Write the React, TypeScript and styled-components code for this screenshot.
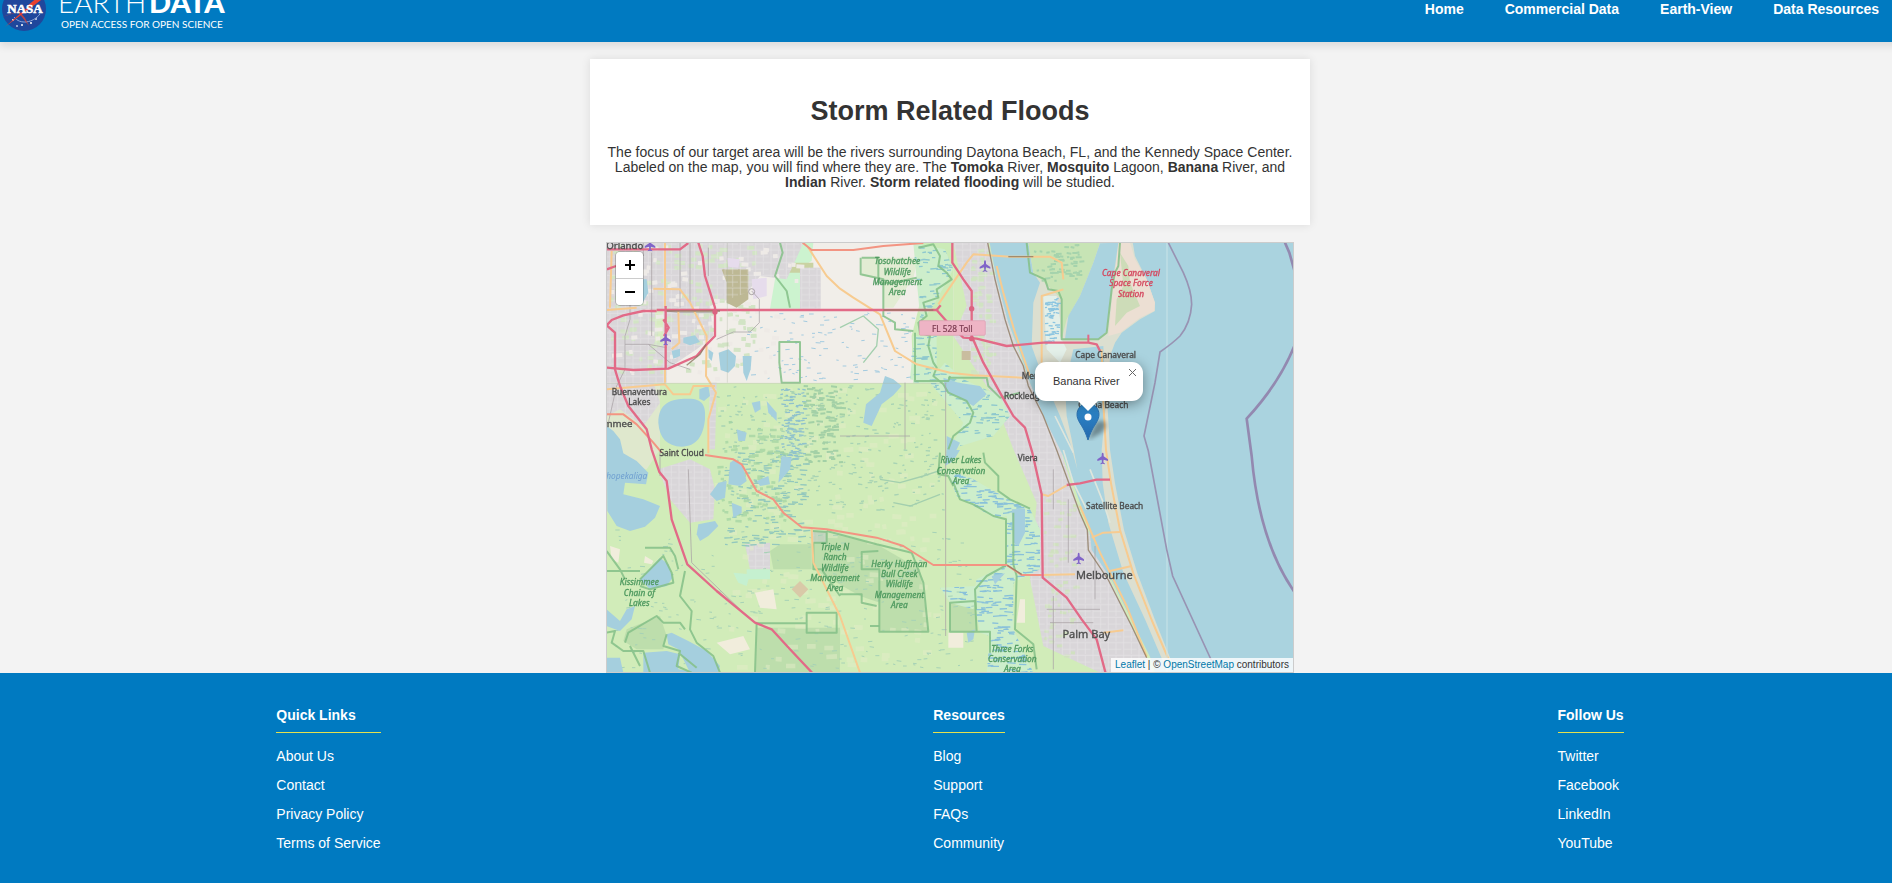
import React from "react";
import styled, { createGlobalStyle } from "styled-components";

const GlobalStyle = createGlobalStyle`
  *, *::before, *::after { box-sizing: border-box; }
  body {
    margin: 0;
    overflow: hidden;
    background: #f3f3f3;
    color: #333;
    font-family: "Liberation Sans", Arial, sans-serif;
    font-size: 14px;
  }
`;

const BLUE = "#007ac1";

const Page = styled.div`
  margin-right: -8px;
`;

const Header = styled.header`
  position: relative;
  display: flex;
  justify-content: space-between;
  height: 42px;
  padding-right: 21px;
  background: ${BLUE};
  box-shadow: 0 4px 8px rgba(0, 0, 0, 0.1);
`;

const LogoLink = styled.a`
  display: block;
  height: 42px;
  overflow: hidden;
`;

const Nav = styled.nav`
  display: flex;
  align-items: flex-start;
  gap: 41px;
  padding-top: 1px;
`;

const NavLink = styled.a`
  color: #fff;
  font-weight: bold;
  line-height: 16px;
  text-decoration: none;
`;

const Main = styled.main`
  display: flex;
  flex-direction: column;
  align-items: center;
  gap: 17px;
  padding-top: 17px;
`;

const Card = styled.section`
  width: 100%;
  max-width: 720px;
  padding: 36px 10px 35px;
  background: #fff;
  box-shadow: 0 0 9px rgba(0, 0, 0, 0.1);
  text-align: center;
`;

const Title = styled.h1`
  margin: 0 0 18px;
  font-size: 27px;
  line-height: 32px;
`;

const Lead = styled.p`
  margin: 0;
  line-height: 15px;
`;

const MapFrame = styled.section`
  position: relative;
  width: 100%;
  max-width: 688px;
  height: 431px;
  overflow: hidden;
  border: 1px solid #ccc;
  background: #ddd;
`;

const MapArt = styled.svg`
  display: block;
  width: 100%;
  height: 100%;
  filter: blur(0.6px);
`;

const ZoomControl = styled.div`
  position: absolute;
  top: 9px;
  left: 9px;
  width: 27px;
  border-radius: 4px;
  overflow: hidden;
  box-shadow: 0 0 0 1px rgba(0, 0, 0, 0.2);
`;

const ZoomButton = styled.button`
  display: grid;
  place-items: center;
  width: 100%;
  height: 26px;
  padding: 0;
  border: 0;
  background: #fff;
  color: #000;
  cursor: pointer;

  & + & {
    height: 27px;
    border-top: 1px solid #ccc;
  }
`;

const Popup = styled.div`
  position: absolute;
  top: 119px;
  left: calc(50% + 85px);
  width: 108px;
  padding: 12px 18px 13px;
  border-radius: 11px;
  background: #fff;
  box-shadow: 0 3px 13px rgba(0, 0, 0, 0.4);
  font-size: 11px;
  line-height: 14px;
  white-space: nowrap;

  &::after {
    content: "";
    position: absolute;
    top: 100%;
    left: 43px;
    border: 10px solid transparent;
    border-top-color: #fff;
    border-bottom: 0;
  }
`;

const PopupClose = styled.button`
  position: absolute;
  top: 0;
  right: 0;
  display: grid;
  place-items: center;
  width: 21px;
  height: 21px;
  padding: 0;
  border: 0;
  background: none;
  cursor: pointer;
`;

const Marker = styled.svg`
  position: absolute;
  top: 160px;
  left: calc(50% + 126px);
  width: 37px;
  height: 38px;
`;

const Attribution = styled.div`
  position: absolute;
  right: 0;
  bottom: 0;
  padding: 0 4px;
  background: rgba(255, 255, 255, 0.8);
  font-size: 10px;
  line-height: 14px;

  a {
    color: #0078a8;
    text-decoration: none;
  }
`;

const Footer = styled.footer`
  display: flex;
  justify-content: space-around;
  padding: 34px 0 32px;
  background: ${BLUE};
  color: #fff;
`;

const FooterHeading = styled.h2`
  margin: 0 0 15px;
  padding-bottom: 9px;
  border-bottom: 1px solid #e6e04e;
  font-size: 14px;
  line-height: 16px;
`;

const FooterList = styled.ul`
  display: flex;
  flex-direction: column;
  gap: 13px;
  margin: 0;
  padding: 0;
  list-style: none;
  line-height: 16px;
`;

const FooterLink = styled.a`
  display: block;
  color: #fff;
  text-decoration: none;
`;

/* ---------- Logo ---------- */

const Logo = () => (
  <svg width="240" height="42" viewBox="0 0 240 42" role="img" aria-label="NASA Earthdata">
    <defs>
      <clipPath id="disc">
        <circle cx="24" cy="9" r="22" />
      </clipPath>
    </defs>
    <circle cx="24" cy="9" r="22" fill="#1f479c" />
    <g clipPath="url(#disc)" fill="#fff">
      <circle cx="13" cy="20" r="1" />
      <circle cx="22" cy="25" r="1" />
      <circle cx="31" cy="23" r="1" />
      <circle cx="17" cy="26" r="1" opacity="0.7" />
      <circle cx="36" cy="19" r="1" opacity="0.8" />
      <path d="M14 17C20 25 33 23 40 14" fill="none" stroke="#8ea6d8" strokeWidth="1" />
    </g>
    <path d="M5 27C14 20 28 10 45 -3L42 -3C29 6 18 15 5 27Z" fill="#e8402f" />
    <path d="M30 6L46 -4L38 -3L27 6Z" fill="#e8402f" />
    <path d="M2 17L18 12L29 26L25 18L19 11Z" fill="#e8402f" opacity="0.75" />
    <text
      x="25"
      y="13"
      textAnchor="middle"
      fill="#fff"
      fontFamily="Liberation Serif, serif"
      fontWeight="bold"
      fontSize="13"
      stroke="#fff"
      strokeWidth="0.5"
    >
      NASA
    </text>
    <text x="58" y="13" fill="#fff" fontFamily="Lato, sans-serif" fontWeight="300" fontSize="28">
      EARTH
    </text>
    <text x="149" y="13" fill="#fff" fontFamily="Lato, sans-serif" fontWeight="900" fontSize="29">
      DATA
    </text>
    <text x="61" y="28" fill="#fff" fontFamily="Lato, sans-serif" fontSize="10">
      OPEN ACCESS FOR OPEN SCIENCE
    </text>
  </svg>
);

/* ---------- Map drawing ---------- */

function scatter(seed: number, count: number, x: number, y: number, w: number, h: number, len: number) {
  let s = seed;
  const next = () => {
    s = (s * 1103515245 + 12345) % 2147483648;
    return s / 2147483648;
  };
  let d = "";
  for (let i = 0; i < count; i++) {
    const px = Math.round(x + next() * w);
    const py = Math.round(y + next() * h);
    const l = Math.round(len * (0.5 + next()));
    d += `M${px} ${py}l${l} ${Math.round(next() * 4 - 2)}`;
  }
  return d;
}

const water = [
  "M175 560C175 500 215 488 260 488C310 486 318 510 315 550C310 600 290 632 245 632C200 630 178 605 175 560Z",
  "M298 460L325 450L330 480L312 495L298 488Z",
  "M356 350L385 340L408 360L405 390L385 410L362 402Z",
  "M428 360H455L452 400L440 435L430 410Z",
  "M250 305L285 298L300 318L270 328L250 320Z",
  "M325 340L340 350L335 375L326 365Z",
  "M105 130H140L145 170L125 205L108 200Z",
  "M215 345L240 338L240 360L220 368Z",
  "M20 570L40 585L60 610L70 652L110 675L145 710L138 745L75 740L70 775L130 790L180 810L165 845L135 872L90 885L50 870L22 825Z",
  "M330 775L355 740L380 735L375 785L350 795Z",
  "M295 865L345 855L355 870L325 900L300 915L290 895Z",
  "M395 800L425 812L425 830L400 845Z",
  "M390 680L405 670L428 690L440 735L420 750L385 745Z",
  "M470 735L505 720L510 745L480 750Z",
  "M545 660L575 665L570 700L545 730L535 740Z",
  "M455 500L480 495L482 520L465 530Z",
  "M500 495L530 530L530 555L505 530Z",
  "M410 580L440 590L435 615L415 615Z",
  "M120 1030L180 965L205 985L218 1025L200 1050L150 1060Z",
  "M20 1120L60 1155L80 1120L105 1110L95 1150L60 1185L20 1170Z",
  "M130 1250L200 1245L240 1255L235 1300L300 1310H130Z",
  "M200 1195L215 1190L265 1215L320 1245L360 1290L355 1310H270L235 1240L205 1225Z",
  "M20 1265H60L70 1310H20Z",
  "M855 420L880 430L905 450L880 478L845 505L815 570L790 560L798 505L840 470Z",
  "M1030 425L1075 440L1140 450L1160 475L1120 510L1070 480L1035 465Z",
  "M1040 642H1080L1060 675L1035 690Z",
  "M1235 820L1275 818L1275 890L1255 930L1240 920Z",
  "M1175 1020L1215 1012L1185 1045Z",
  "M1100 1190L1125 1180L1120 1210L1105 1220Z",
  "M1040 600L1080 620L1060 660L1040 650Z",
];

const urban = [
  "M21 21H610L560 130L480 120L440 170L330 210L340 300L290 340L200 400V440H21Z",
  "M21 440H160L180 500L130 570L60 520L21 540Z",
  "M175 700L270 670L330 700L345 760L340 850L270 860L210 790Z",
  "M600 95H662V218H600Z",
  "M435 925L510 920V1000H450Z",
  "M635 885H680V920H635Z",
  "M1060 21H1165L1190 130L1225 260L1290 440L1385 650L1440 832L1530 1032L1640 1262L1660 1310H1500L1330 1230L1290 1030L1310 800L1240 640L1180 480L1060 300L1100 210Z",
  "M1300 170H1330V380H1290Z",
  "M330 440H350L345 640H325Z",
];

const marshes = [
  "M940 21L1035 40L1060 100L1000 210L960 260L940 330L930 430L980 440L1035 380L1090 430L1200 480L1230 540L1180 600L1050 640L1090 560L990 440L940 430V340L960 240Z",
  "M1040 700L1070 780L1190 850L1220 840V985L1130 1030L1120 1080L1140 1190L1170 1200L1160 1310H1300L1240 1180V1040L1320 1000V880L1290 820L1190 770L1120 730Z",
  "M940 300H1010V440H940Z",
  "M1020 1055L1130 1050L1120 1120L1050 1100Z",
];

const reserves = [
  "M640 885H680V890L830 925L960 1000L985 1185H840V1100L780 1080L640 1000Z",
  "M470 1175H720V1310H468Z",
  "M1050 1100L1130 1120V1185H1050Z",
  "M510 945L540 925H635V1000H520Z",
  "M80 1180L180 1140L200 1200L190 1240L110 1240L70 1215Z",
];

const reserveLines = [
  "M540 20L548 50L525 120L560 165L570 215",
  "M538 318H600V440H545L538 380Z",
  "M785 65H835V140H880L950 125",
  "M782 65V115L850 130V240L885 260V280L940 285",
  "M955 35L1000 25L1020 60L1015 90L1040 110L1055 130L1010 160L1015 185L970 200L980 240L955 260L960 290L990 300L985 330L1000 380L1010 395L1000 420L1030 445L1045 470L1100 495L1120 530L1110 560L1060 600L1045 640",
  "M945 290V435H1045L1050 420",
  "M1045 425H1160L1165 450L1200 485L1260 470",
  "M1280 20L1290 110L1335 130L1345 160L1375 165L1385 190V310H1495L1520 290L1535 160L1545 110L1555 90L1560 20",
  "M1060 740L1080 790L1120 805L1180 840L1218 850V985",
  "M1020 650L1015 715L1045 720L1060 750",
  "M1150 650L1155 680L1195 720L1195 765L1230 790L1290 818",
  "M1240 830V985L1250 1020L1245 1180L1270 1200L1300 1225L1310 1300",
  "M1130 1185L1125 1095L1050 1100V1187H1170V1250",
  "M1218 988L1160 1020L1125 1060L1128 1120",
  "M640 920V1000H665L720 1080M638 885L680 888V920H640",
  "M680 885L830 925L935 950L970 1040L985 1187H838V1000H785V948L835 945",
  "M720 1075H785V1100L830 1110M810 1170H838",
  "M465 1310L470 1162H620V1190H710V1130H620V1160",
  "M135 935H210L225 960L235 1000",
  "M20 945L60 1000L75 1030M20 1005H120",
  "M120 1030L190 960L215 1010L220 1040L150 1060L120 1050",
  "M255 1005L240 1080L275 1125L270 1180L290 1220L340 1260L360 1310",
  "M75 1220L85 1190L170 1140L190 1160L240 1160L255 1180M20 1190L45 1185L35 1220L70 1245L130 1245L150 1310M90 1230L120 1290",
  "M200 1195L190 1230L240 1245L230 1290L275 1310M235 1250L290 1295",
];

const trunkRoads = [
  "M20 40H240L265 21",
  "M21 100L48 90",
  "M295 20L308 60L315 120L345 215V300L320 325L290 360L205 398L100 402L20 395",
  "M170 222H1010L1045 262L1090 305L1130 308L1220 330L1330 320H1465L1490 325L1500 345",
  "M20 268L35 252L70 238L130 225H170",
  "M20 268L45 290V400L60 450L85 510L140 580L155 640L178 708L200 735L215 850L262 985L350 1065L465 1160L515 1180L570 1240L638 1312",
  "M197 210V398M190 250L206 275L192 300",
  "M1057 20V80L1090 130L1115 165V300L1150 380L1200 470L1240 540L1275 575L1297 650L1325 775L1328 1025L1400 1085L1445 1150L1490 1210L1517 1312",
  "M1010 222L1022 208",
  "M1400 747L1440 742L1490 731H1530",
];

const primaryRoads = [
  "M315 657L400 670L425 685L470 765L520 790L550 830L605 874L680 880L830 905L910 930L1000 987H1220L1265 1017H1325",
  "M608 20L635 42H760L850 30L970 21",
  "M20 535H70L110 565L160 620L185 650",
];

const secondaryRoads = [
  "M195 20V215M195 395V440",
  "M160 158L240 160L270 200L320 300L318 420L348 470L325 550V652",
  "M235 225L238 320L215 340",
  "M35 45L30 215M20 222L110 215",
  "M20 460L195 445L220 475H270L280 450H345",
  "M625 35L680 120L720 158L760 185L840 235L885 345L950 385L1050 410L1120 418L1270 425",
  "M1015 205L1100 80L1120 55L1230 62H1350L1385 80L1390 130",
  "M1325 380V180L1390 160",
  "M1190 90L1210 170L1245 290L1290 420",
  "M635 876L640 980L720 1140L780 1310",
  "M1325 775L1345 780L1400 748M1325 1017L1425 1015",
  "M1475 905L1510 890L1560 888M1530 1005L1595 990M1510 1190L1570 1183",
  "M1505 340L1510 500L1518 642L1533 742L1560 882L1600 1012L1655 1152L1712 1285",
  "M1440 810L1500 950L1580 1110L1640 1262",
];

const greyRoads = [
  "M90 200V250L75 300V400L50 450L25 560",
  "M75 325H145L200 335M145 325L210 380L270 400",
  "M200 225L240 230H340",
  "M455 165L478 190V260L450 288H400L350 310",
  "M155 50V300M240 21V215M270 21V200M130 21V60",
  "M325 35V120M180 642V720",
  "M915 440V640M1037 440V1200M720 600H930",
  "M1405 790V980M1360 700V820",
  "M265 700L275 980L420 1120",
  "M1360 1080V1300M1485 930V1090M1340 1120H1500M1350 1160H1480",
];

const planes: [number, number][] = [
  [197, 310],
  [150, 28],
  [1155, 90],
  [1508, 667],
  [1436, 967],
];

interface MapLabel {
  x: number;
  y: number;
  lines: string[];
  size?: number;
  tone?: "place" | "park" | "base" | "lake";
  anchor?: "start" | "middle" | "end";
}

const labels: MapLabel[] = [
  { x: 130, y: 38, lines: ["Orlando"], size: 29, anchor: "end" },
  { x: 118, y: 477, lines: ["Buenaventura", "Lakes"] },
  { x: 97, y: 573, lines: ["Kissimmee"], size: 29, anchor: "end" },
  { x: 245, y: 660, lines: ["Saint Cloud"] },
  { x: 142, y: 728, lines: ["Tohopekaliga"], tone: "lake", anchor: "end" },
  { x: 892, y: 85, lines: ["Tosohatchee", "Wildlife", "Management", "Area"], tone: "park" },
  { x: 1593, y: 120, lines: ["Cape Canaveral", "Space Force", "Station"], tone: "base" },
  { x: 1608, y: 367, lines: ["Cape Canaveral"], anchor: "end" },
  { x: 1265, y: 430, lines: ["Merritt Island"], anchor: "start" },
  { x: 1212, y: 490, lines: ["Rockledge"], anchor: "start" },
  { x: 1585, y: 515, lines: ["Cocoa Beach"], anchor: "end" },
  { x: 1283, y: 674, lines: ["Viera"] },
  { x: 1544, y: 819, lines: ["Satellite Beach"] },
  { x: 1513, y: 1029, lines: ["Melbourne"], size: 33 },
  { x: 1459, y: 1207, lines: ["Palm Bay"], size: 33 },
  { x: 1083, y: 682, lines: ["River Lakes", "Conservation", "Area"], tone: "park" },
  { x: 705, y: 942, lines: ["Triple N", "Ranch", "Wildlife", "Management", "Area"], tone: "park" },
  { x: 898, y: 992, lines: ["Herky Huffman", "Bull Creek", "Wildlife", "Management", "Area"], tone: "park" },
  { x: 118, y: 1048, lines: ["Kissimmee", "Chain of", "Lakes"], tone: "park" },
  { x: 1237, y: 1247, lines: ["Three Forks", "Conservation", "Area"], tone: "park" },
];

const tones = { place: "#4d4d4d", park: "#4f9a60", base: "#d4475e", lake: "#6f9fd0" };

const FloodMap = () => (
  <MapArt
    viewBox="21 21 2058 1287"
    preserveAspectRatio="xMidYMid slice"
    role="img"
    aria-label="Map of the rivers around Cape Canaveral and Melbourne, Florida"
  >
    <defs>
      <pattern id="streets" width="46" height="38" patternUnits="userSpaceOnUse">
        <path d="M0 4H46M7 0V38M30 4V38M7 24H46" stroke="#eceaec" strokeWidth="2" />
      </pattern>
      <clipPath id="marshClip">
        {marshes.map((d) => (
          <path key={d} d={d} />
        ))}
      </clipPath>
    </defs>

    <rect x="0" y="0" width="2100" height="1330" fill="#d1ecb9" />
    <path d="M0 0H1060V442H0Z" fill="#f1eee9" />
    <path d="M0 442H180V640L140 700H0Z" fill="#dfe8cd" />
    <path d="M525 20H640L635 75L600 95V218H510L525 130Z" fill="#ccf3cf" />
    <path d="M530 80H640V110H530Z" fill="#c9d2a2" />
    <path d="M785 65H955L940 125L880 215H850V130L785 120Z" fill="#e2ecd3" />
    <path d="M955 21H1060V442H940L935 300L960 200Z" fill="#cbebb7" />
    {urban.map((d) => (
      <path key={d} d={d} fill="#d9d6d9" />
    ))}
    <path d="M165 220H190V330H165Z" fill="#d7ebc0" />
    <path d={scatter(7, 150, 30, 30, 430, 380, 16)} stroke="#d2e4c5" strokeWidth="12" />
    <path d={scatter(13, 90, 30, 30, 560, 400, 16)} stroke="#eeeae6" strokeWidth="12" />
    <path d={scatter(17, 70, 1110, 40, 60, 400, 14)} stroke="#d0e3c2" strokeWidth="10" />
    <path d={scatter(57, 60, 1330, 780, 90, 500, 14)} stroke="#d0e0c0" strokeWidth="9" />
    <path d="M365 100H445V190L410 215L380 200V140Z" fill="#bdb894" />
    {urban.map((d) => (
      <path key={d} d={d} fill="url(#streets)" opacity="0.6" />
    ))}
    <path d="M380 65L420 70L415 95L385 92ZM455 130L500 125L500 180L460 190Z" fill="#e6dcec" />

    {reserves.map((d) => (
      <path key={d} d={d} fill="#a9cfa0" opacity="0.5" />
    ))}
    {marshes.map((d) => (
      <path key={d} d={d} fill="#cdeecb" />
    ))}
    <path d={scatter(19, 160, 340, 450, 660, 850, 22)} stroke="#e4edc8" strokeWidth="14" opacity="0.5" />
    <path d={scatter(23, 320, 350, 450, 680, 380, 9)} stroke="#a8d3b4" strokeWidth="4" />
    <path d={scatter(29, 260, 30, 880, 1090, 420, 10)} stroke="#a6d2b6" strokeWidth="3" />
    <path d={scatter(31, 110, 440, 230, 500, 205, 10)} stroke="#a3cbe0" strokeWidth="3" />
    <path d={scatter(37, 150, 370, 640, 240, 290, 16)} stroke="#93c8bd" strokeWidth="4" />
    <path d={scatter(41, 110, 540, 450, 70, 220, 12)} stroke="#90c2cc" strokeWidth="4" />
    <path d={scatter(43, 90, 610, 450, 110, 230, 14)} stroke="#a3d0a6" strokeWidth="6" />
    <path d={scatter(44, 90, 350, 560, 200, 300, 14)} stroke="#a2d3a2" strokeWidth="8" opacity="0.7" />
    <g clipPath="url(#marshClip)">
      <path d={scatter(47, 600, 930, 20, 400, 640, 16)} stroke="#8ec8ce" strokeWidth="4" />
      <path d={scatter(53, 620, 1000, 660, 320, 650, 18)} stroke="#89c1da" strokeWidth="4" />
    </g>
    <path
      d="M840 730L900 740L970 720L1030 700M880 800L930 810L1020 775M720 275L790 240L835 280L830 330L790 380"
      fill="none"
      stroke="#a3cfae"
      strokeWidth="4"
    />
    <path d="M400 1010L450 1015L440 1050L415 1040ZM440 1000H510V1030H440Z" fill="#c5f0d0" />
    <path d="M575 1060L600 1035L625 1060L600 1085Z" fill="#d9c9a8" />
    <path
      d="M465 1070L520 1060L530 1120L480 1115ZM350 1220L430 1200L450 1240L390 1255ZM30 930L60 940L55 980L35 970ZM1045 1190H1090V1235H1045ZM1260 1090H1275V1160H1250ZM135 960L160 975L155 985L132 980Z"
      fill="#f1eddc"
    />
    <path d="M1085 345H1112V372H1085Z" fill="#c9bd9f" />

    {water.map((d) => (
      <path key={d} d={d} fill="#a5cfde" />
    ))}

    {/* lagoon and ocean */}
    <path
      d="M1165 0L1190 130L1225 260L1260 350L1290 440L1340 560L1390 660L1440 800L1468 882L1475 942L1535 1032L1650 1262L1670 1330H2100V0Z"
      fill="#aad3df"
    />
    <path
      d="M1285 20L1300 110L1320 140L1300 200L1295 330L1320 400L1350 470L1380 540L1410 620L1432 700L1415 610L1400 540L1395 450L1420 340L1510 330L1518 500L1505 642L1508 740L1525 860L1570 1010L1635 1150L1695 1290L1720 1290L1665 1152L1612 1012L1572 882L1545 742L1530 642L1522 500L1530 360L1545 320L1565 290L1620 250L1665 225V200L1640 130L1605 60L1595 0H1285Z"
      fill="#dcdfd0"
    />
    <path d="M1285 20L1300 110L1345 150L1385 190V310L1400 250L1440 180L1480 80L1500 20Z" fill="#c7e4b5" />
    <path d="M1555 20H1590L1605 70L1640 130L1665 200L1662 225L1620 245L1560 290L1525 300L1540 150Z" fill="#ecdfd3" />
    <path d="M1560 50L1585 90L1590 140L1620 210L1580 230L1545 270L1550 190L1570 150Z" fill="#cddcb8" />
    <path d="M1500 22L1480 80L1440 180L1405 240L1395 308L1495 308L1518 288L1535 150L1545 90L1555 20Z" fill="#aad3df" />
    <path d="M1330 180L1370 180L1380 250V300L1400 340L1380 380L1340 340Z" fill="#e3efe8" />
    <path d={scatter(61, 60, 1332, 185, 40, 140, 10)} stroke="#8cc5e0" strokeWidth="4" />
    <path d={scatter(67, 60, 1300, 25, 140, 110, 12)} stroke="#a5d3ac" strokeWidth="6" />
    <path
      d="M1390 642L1420 740L1460 820M1470 700L1510 800L1530 860M1365 540L1420 650"
      fill="none"
      stroke="#dfe6dc"
      strokeWidth="5"
    />

    {reserveLines.map((d) => (
      <path key={d} d={d} fill="none" stroke="#84bf87" strokeWidth="6" strokeLinejoin="round" opacity="0.85" />
    ))}
    {greyRoads.map((d) => (
      <path key={d} d={d} fill="none" stroke="#aaa3a6" strokeWidth="3" opacity="0.75" />
    ))}
    {secondaryRoads.map((d) => (
      <path key={d} d={d} fill="none" stroke="#f7cb90" strokeWidth="6" strokeLinejoin="round" />
    ))}
    {primaryRoads.map((d) => (
      <path key={d} d={d} fill="none" stroke="#f39482" strokeWidth="6" strokeLinejoin="round" />
    ))}
    {trunkRoads.map((d) => (
      <path key={d} d={d} fill="none" stroke="#e26a87" strokeWidth="7" strokeLinejoin="round" />
    ))}
    <path
      d="M1163 20L1185 130L1215 250L1240 330L1270 390L1285 450L1330 540L1370 642L1440 832L1462 882L1465 942L1525 1032L1595 1170L1640 1265M850 222H1000M1225 62H1300M360 225H200M1222 988L1265 1015M260 388L300 355L318 325"
      fill="none"
      stroke="#8d7a62"
      strokeWidth="4"
      opacity="0.8"
    />
    <circle cx="345" cy="228" r="8" fill="#db6481" />
    <circle cx="1115" cy="218" r="8" fill="#db6481" />
    <circle cx="1115" cy="308" r="8" fill="#db6481" />
    <circle cx="455" cy="167" r="9" fill="none" stroke="#aaa3a6" strokeWidth="3" />
    <path d="M1465 320V296" stroke="#e26a87" strokeWidth="6" />

    {/* tile seams */}
    <path d="M21 442H1040M382 21V440" stroke="#a8b09c" strokeWidth="2" opacity="0.5" />
    <path d="M1701 21V1310" stroke="#c9e4e8" strokeWidth="3" />

    {/* maritime boundaries */}
    <path
      d="M1705 20L1750 110Q1775 165 1775 205Q1772 260 1740 300Q1720 320 1680 348L1665 440L1632 600L1645 645L1700 940L1718 1020L1835 1275"
      fill="none"
      stroke="#9893b3"
      strokeWidth="5"
    />
    <path
      d="M2055 20L2068 50L2085 110M2085 325Q2040 440 1940 548L1955 660Q1978 920 2085 1070"
      fill="none"
      stroke="#9389b0"
      strokeWidth="8"
    />

    <rect x="958" y="254" width="198" height="44" rx="4" fill="#eeb4c5" stroke="#dc9db2" strokeWidth="2" />
    <text
      x="1057"
      y="287"
      textAnchor="middle"
      fontFamily="Noto Sans, sans-serif"
      fontSize="25"
      fill="#7d3c52"
      stroke="#7d3c52"
      strokeWidth="0.6"
    >
      FL 528 Toll
    </text>

    {planes.map(([x, y]) => (
      <path
        key={`${x}-${y}`}
        transform={`translate(${x} ${y})`}
        d="M0 -17C3 -17 3 -12 3 -6L16 3V8L3 4L2 12L7 16V18L0 16L-7 18V16L-2 12L-3 4L-16 8V3L-3 -6C-3 -12 -3 -17 0 -17Z"
        fill="#8064c8"
      />
    ))}

    {labels.map(({ x, y, lines, size = 25, tone = "place", anchor = "middle" }) => (
      <text
        key={`${lines[0]}-${y}`}
        textAnchor={anchor}
        fontFamily="Noto Sans, sans-serif"
        fontSize={size}
        fontStyle={tone === "place" ? "normal" : "italic"}
        fill={tones[tone]}
        stroke={tones[tone]}
        strokeWidth={tone === "lake" ? 0 : 1}
      >
        {lines.map((line, i) => (
          <tspan key={line} x={x} y={y + i * 31}>
            {line}
          </tspan>
        ))}
      </text>
    ))}
  </MapArt>
);

const LocationMarker = () => (
  <Marker viewBox="0 0 37 38" role="img" aria-label="Banana River marker">
    <defs>
      <linearGradient id="pin" x1="0" y1="0" x2="0" y2="1">
        <stop offset="0" stopColor="#2e8bcd" />
        <stop offset="1" stopColor="#2468ad" />
      </linearGradient>
      <filter id="soft" x="-30%" y="-30%" width="160%" height="160%">
        <feGaussianBlur stdDeviation="2" />
      </filter>
    </defs>
    <path d="M12 37L19 21Q24 15 29 19Q32 24 25 30Z" fill="#000" opacity="0.35" filter="url(#soft)" />
    <path
      d="M12 0.5C5.500 0.500 1 5.500 1 11.500C1 17 5 21 8 27C10 31 11 34 12 37C13 34 14 31 16 27C19 21 23 17 23 11.500C23 5.500 18.500 0.500 12 0.500Z"
      fill="url(#pin)"
      stroke="#2a6fae"
      strokeWidth="1"
    />
    <circle cx="12" cy="14" r="3.500" fill="#fff" />
  </Marker>
);

/* ---------- Page content ---------- */

const navItems = ["Home", "Commercial Data", "Earth-View", "Data Resources"];

const footerColumns = [
  { title: "Quick Links", links: ["About Us", "Contact", "Privacy Policy", "Terms of Service"] },
  { title: "Resources", links: ["Blog", "Support", "FAQs", "Community"] },
  { title: "Follow Us", links: ["Twitter", "Facebook", "LinkedIn", "YouTube"] },
];

export default function App() {
  return (
    <>
      <GlobalStyle />
      <Page>
        <Header>
          <LogoLink href="#">
            <Logo />
          </LogoLink>
          <Nav>
            {navItems.map((item) => (
              <NavLink key={item} href="#">
                {item}
              </NavLink>
            ))}
          </Nav>
        </Header>
        <Main>
          <Card>
            <Title>Storm Related Floods</Title>
            <Lead>
              The focus of our target area will be the rivers surrounding Daytona Beach, FL, and the Kennedy Space
              Center. Labeled on the map, you will find where they are. The <b>Tomoka</b> River, <b>Mosquito</b>{" "}
              Lagoon, <b>Banana</b> River, and <b>Indian</b> River. <b>Storm related flooding</b> will be studied.
            </Lead>
          </Card>
          <MapFrame aria-label="Flood map">
            <FloodMap />
            <LocationMarker />
            <Popup>
              Banana River
              <PopupClose type="button" aria-label="Close popup">
                <svg width="9" height="9" viewBox="0 0 9 9" aria-hidden="true">
                  <path d="M1 1L8 8M8 1L1 8" stroke="#666" strokeWidth="1" />
                </svg>
              </PopupClose>
            </Popup>
            <ZoomControl>
              <ZoomButton type="button" aria-label="Zoom in">
                <svg width="12" height="12" viewBox="0 0 12 12" aria-hidden="true">
                  <path d="M1 6H11M6 1V11" stroke="#000" strokeWidth="2" />
                </svg>
              </ZoomButton>
              <ZoomButton type="button" aria-label="Zoom out">
                <svg width="12" height="12" viewBox="0 0 12 12" aria-hidden="true">
                  <path d="M1 6H11" stroke="#000" strokeWidth="2" />
                </svg>
              </ZoomButton>
            </ZoomControl>
            <Attribution>
              <a href="#">Leaflet</a> | © <a href="#">OpenStreetMap</a> contributors
            </Attribution>
          </MapFrame>
        </Main>
        <Footer>
          {footerColumns.map(({ title, links }) => (
            <div key={title}>
              <FooterHeading>{title}</FooterHeading>
              <FooterList>
                {links.map((link) => (
                  <li key={link}>
                    <FooterLink href="#">{link}</FooterLink>
                  </li>
                ))}
              </FooterList>
            </div>
          ))}
        </Footer>
      </Page>
    </>
  );
}
